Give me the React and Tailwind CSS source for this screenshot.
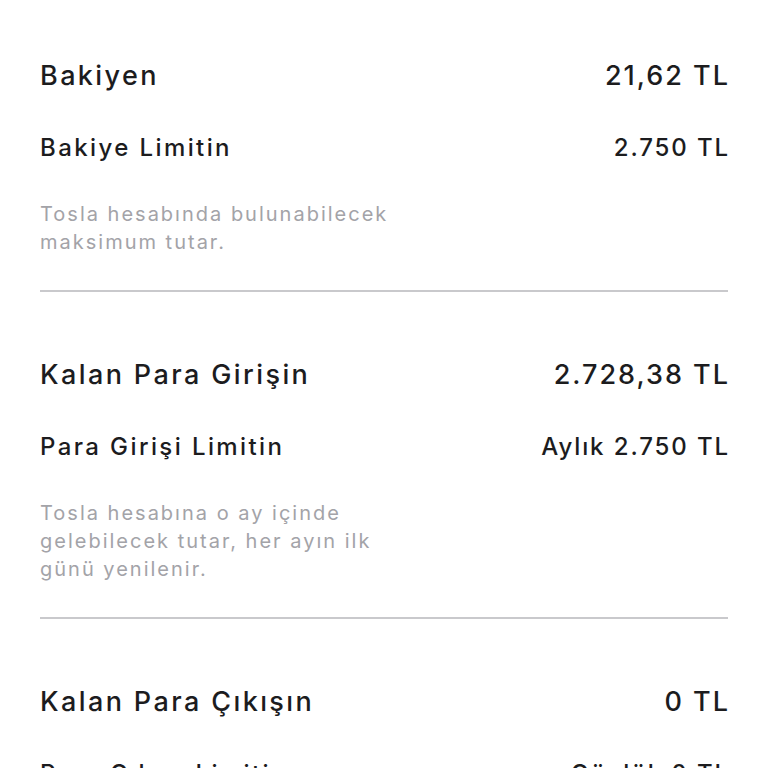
const sections = [
  {
    title: "Bakiyen",
    value: "21,62 TL",
    label: "Bakiye Limitin",
    limit: "2.750 TL",
    note: ["Tosla hesabında bulunabilecek", "maksimum tutar."],
  },
  {
    title: "Kalan Para Girişin",
    value: "2.728,38 TL",
    label: "Para Girişi Limitin",
    limit: "Aylık 2.750 TL",
    note: ["Tosla hesabına o ay içinde", "gelebilecek tutar, her ayın ilk", "günü yenilenir."],
  },
  {
    title: "Kalan Para Çıkışın",
    value: "0 TL",
    label: "Para Çıkışı Limitin",
    limit: "Günlük 0 TL",
    note: ["Tosla hesabından o gün içinde", "gönderilebilecek tutar."],
  },
];

export default function App() {
  return (
    <div className="min-h-screen bg-white px-10 pt-[60px] text-[#1c1c1e] font-['Inter',sans-serif]">
      {sections.map((s, i) => (
        <div key={i}>
          {i > 0 && <div className="h-[2px] bg-[#c9c9cc] mt-[34px] mb-[67px]" />}
          {/* title row */}
          <div className="flex justify-between items-center text-[27px] leading-8 font-medium">
            <span className="tracking-[2.4px]">{s.title}</span>
            <span className="tracking-[2px] -mr-[2px]">{s.value}</span>
          </div>
          {/* limit row */}
          <div className="flex justify-between items-center text-[24px] leading-7 font-medium mt-[42px]">
            <span className="tracking-[2.4px]">{s.label}</span>
            <span className="tracking-[1.9px] -mr-[2px]">{s.limit}</span>
          </div>
          <div className="mt-[38px] text-[20px] leading-7 text-[#a3a3a8] tracking-[2px]">
            {s.note.map((l, j) => (
              <div key={j}>{l}</div>
            ))}
          </div>
        </div>
      ))}
    </div>
  );
}
